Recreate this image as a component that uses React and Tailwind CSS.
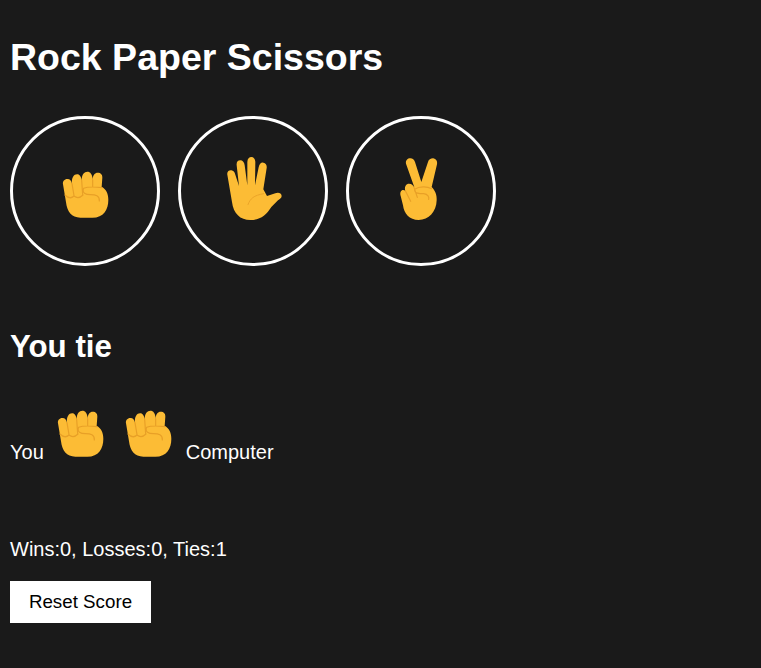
import React from "react";

const SKIN = "#fcbc35";
const CREASE = "#e8a027";

function Fist({ className }) {
  return (
    <svg viewBox="0 0 180 180" className={`h-[60px] w-[60px] shrink-0 ${className || ""}`}>
      <path
        fill={SKIN}
        d="M24 58C22 48 30 41 38 42C45 42 49 47 51 56C49 38 57 28 66 28C73 28 78 33 80 46C80 28 88 20 97 20C106 20 112 27 113 44C113 30 120 23 128 23C137 23 143 29 142 38L140 66C153 72 160 86 160 104C160 134 146 158 112 158L76 158C50 158 36 140 33 112Z"
      />
      <path
        fill="none"
        stroke={CREASE}
        strokeWidth="3.5"
        strokeLinecap="round"
        d="M51 56L57 92M80 46L83 90M113 44L113 66M30 90C40 100 50 100 57 93C66 100 76 98 84 90M86 70C100 64 125 66 141 68M86 70C80 84 92 89 106 89C122 89 134 92 133 108"
      />
    </svg>
  );
}

function Hand({ className }) {
  return (
    <svg viewBox="0 0 198 216" className={`h-[72px] w-[66px] shrink-0 ${className || ""}`}>
      <path
        fill={SKIN}
        d="M16 68C14 58 22 54 28 55C34 56 38 60 40 68L51 102L44 40C43 30 47 25 55 25C62 25 67 31 68 40L76 100L76 30C76 20 82 15 88 15C95 15 100 21 100 30L99 100L110 46C112 36 117 31 124 32C132 33 135 40 134 48L124 112L135 132L160 124C170 120 178 124 179 132C179 138 172 142 168 145L148 165C132 190 115 204 85 204C55 204 34 185 30 150Z"
      />
      <path fill="none" stroke={CREASE} strokeWidth="2.5" strokeLinecap="round" d="M78 158C84 140 95 130 125 125" />
    </svg>
  );
}

function Peace({ className }) {
  return (
    <svg viewBox="0 0 168 216" className={`h-[72px] w-[56px] shrink-0 ${className || ""}`}>
      <path
        fill={SKIN}
        d="M42 35C40 25 47 19 55 19C62 19 67 24 69 30L88 90L108 30C110 23 116 19 123 19C132 20 137 28 135 37L119 105C129 115 135 128 134 145C133 180 110 204 80 204C52 204 36 185 33 160L26 132C22 118 30 110 40 116C36 103 43 95 51 95C60 95 64 101 67 106Z"
      />
      <path
        fill="none"
        stroke={CREASE}
        strokeWidth="3.5"
        strokeLinecap="round"
        d="M40 116L56 148M66 106L76 136M68 112C85 100 108 105 119 110M68 112C66 125 85 125 95 125C108 127 112 135 110 142"
      />
    </svg>
  );
}

function Choice({ children }) {
  return (
    <button className="flex h-[150px] w-[150px] items-center justify-center rounded-full border-[3px] border-white bg-transparent">
      {children}
    </button>
  );
}

function App() {
  return (
    <div className="min-h-screen bg-[#1a1a1a] px-2.5 text-white font-['Liberation_Sans',Arial,sans-serif]">
      {/* Header */}
      <h1 className="pt-9 text-[37.5px] font-bold leading-[43px]">Rock Paper Scissors</h1>

      {/* Choices */}
      <div className="mt-[37px] flex gap-[18px]">
        <Choice>
          <Fist className="mt-2" />
        </Choice>
        <Choice>
          <Hand className="mb-1.5 ml-1" />
        </Choice>
        <Choice>
          <Peace className="mb-1.5 mr-0.5" />
        </Choice>
      </div>

      {/* Result */}
      <h2 className="mt-[63px] text-[31.25px] font-bold leading-9">You tie</h2>

      <div className="mt-[39px] flex items-end text-[20px] leading-[23px]">
        <span>You</span>
        <Fist className="ml-1.5" />
        <Fist className="ml-2" />
        <span className="ml-2">Computer</span>
      </div>

      {/* Score */}
      <p className="mt-[74px] text-[20px] leading-[23px]">Wins:0, Losses:0, Ties:1</p>
      <button className="mt-5 block h-[42px] w-[141px] bg-white text-[18.75px] text-black">Reset Score</button>
    </div>
  );
}

export default App;
